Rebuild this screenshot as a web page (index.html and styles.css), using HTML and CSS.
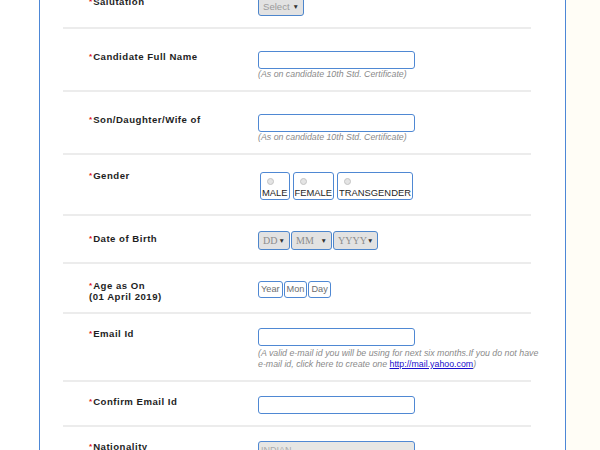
FILE: index.html
```html
<!DOCTYPE html>
<html lang="en">

<head>
    <meta charset="UTF-8">
    <meta name="viewport" content="width=device-width, initial-scale=1.0">
    <title>Application Form</title>
    <link rel="stylesheet" href="styles.css">
</head>

<body>
    <div class="page">
        <div class="form-box">
            <div class="row">
                <div class="label"><span class="req">*</span>Salutation</div>
                <div class="field">
                    <span class="select sel-sal">Select<i>&#9660;</i></span>
                </div>
            </div>

            <div class="row row-name">
                <div class="label"><span class="req">*</span>Candidate Full Name</div>
                <div class="field">
                    <span class="input"></span>
                    <p class="hint">(As on candidate 10th Std. Certificate)</p>
                </div>
            </div>

            <div class="row row-name">
                <div class="label"><span class="req">*</span>Son/Daughter/Wife of</div>
                <div class="field">
                    <span class="input"></span>
                    <p class="hint">(As on candidate 10th Std. Certificate)</p>
                </div>
            </div>

            <div class="row row-gender">
                <div class="label"><span class="req">*</span>Gender</div>
                <div class="field radios">
                    <label class="radio"><span class="dot"></span>MALE</label>
                    <label class="radio"><span class="dot"></span>FEMALE</label>
                    <label class="radio"><span class="dot"></span>TRANSGENDER</label>
                </div>
            </div>

            <div class="row row-dob">
                <div class="label"><span class="req">*</span>Date of Birth</div>
                <div class="field dates">
                    <span class="select serif sel-dd">DD<i>&#9660;</i></span>
                    <span class="select serif sel-mm">MM<i>&#9660;</i></span>
                    <span class="select serif sel-yy">YYYY<i>&#9660;</i></span>
                </div>
            </div>

            <div class="row row-age">
                <div class="label"><span class="req">*</span>Age as On<br>(01 April 2019)</div>
                <div class="field ages">
                    <span class="age">Year</span>
                    <span class="age">Mon</span>
                    <span class="age">Day</span>
                </div>
            </div>

            <div class="row row-email">
                <div class="label"><span class="req">*</span>Email Id</div>
                <div class="field">
                    <span class="input"></span>
                    <p class="hint hint-wide">(A valid e-mail id you will be using for next six months.If you do not have e-mail id, click here to create one <a href="#">http://mail.yahoo.com</a>)</p>
                </div>
            </div>

            <div class="row">
                <div class="label"><span class="req">*</span>Confirm Email Id</div>
                <div class="field">
                    <span class="input"></span>
                </div>
            </div>

            <div class="row">
                <div class="label"><span class="req">*</span>Nationality</div>
                <div class="field">
                    <span class="input input-off">INDIAN</span>
                </div>
            </div>
        </div>
        <div class="side"></div>
    </div>
</body>

</html>
```

FILE: styles.css
```css
* {
    margin: 0;
    padding: 0;
    box-sizing: border-box;
}

body {
    background: #fff;
    font-family: "Liberation Sans", Arial, sans-serif;
    color: #222;
}

.page {
    display: flex;
    height: 450px;
    overflow: hidden;
}

.form-box {
    width: 527px;
    margin-left: 39px;
    margin-top: -18px;
    border-left: 1px solid #4d87d6;
    border-right: 1px solid #4d87d6;
    background: #fff;
    flex-shrink: 0;
}

.side {
    flex: 1;
    background: #fffdf6;
}

.row {
    display: flex;
    align-items: flex-start;
    margin: 0 34px 0 23px;
    padding: 14px 0 11px 26px;
    border-bottom: 2px solid #ececec;
}

.row-name {
    padding-top: 22px;
    padding-bottom: 10px;
}

.row-gender {
    padding-top: 17px;
    padding-bottom: 14px;
}

.row-dob {
    padding-top: 15px;
    padding-bottom: 12px;
}

.row-age {
    padding-top: 17px;
    padding-bottom: 10px;
}

.row-email {
    padding-bottom: 10px;
}

.label {
    width: 169px;
    flex-shrink: 0;
    font-size: 9.6px;
    line-height: 11px;
    font-weight: bold;
    letter-spacing: 0.5px;
    color: #1e1e1e;
}

.row-gender .label {
    margin-top: -2px;
}

.row-dob .label {
    margin-top: 2px;
}

.row-age .label {
    margin-top: -1px;
}

.req {
    color: #e0141e;
    font-size: 8px;
    letter-spacing: 0;
    margin-right: 1px;
    vertical-align: top;
}

.field {
    flex: 1;
}

.input {
    display: block;
    width: 157px;
    height: 18px;
    border: 1px solid #4f88d3;
    border-radius: 3px;
    background: #fff;
}

.input-off {
    background: #e6e6e4;
    color: #aaa;
    font-size: 9px;
    line-height: 16px;
    padding-left: 2px;
}

.hint {
    font-size: 8.8px;
    line-height: 11px;
    font-style: italic;
    color: #8a8a8a;
}

.hint-wide {
    width: 284px;
    margin-top: 2px;
}

.hint a {
    color: #1a0dcc;
    font-style: normal;
    text-decoration: underline;
}

.select {
    display: inline-flex;
    align-items: center;
    justify-content: space-between;
    height: 19px;
    padding: 0 4px 0 4px;
    background: #e2e2e2;
    border: 1px solid #4d86cc;
    border-radius: 3px;
    font-size: 9.6px;
    color: #9a9a9a;
}

.select i {
    font-style: normal;
    font-size: 6.5px;
    color: #333;
}

.serif {
    font-family: "Liberation Serif", "Times New Roman", serif;
    font-size: 10px;
    color: #8c8c8c;
}

.sel-sal {
    width: 46px;
}

.dates {
    display: flex;
    gap: 1px;
}

.sel-dd {
    width: 32px;
}

.sel-mm {
    width: 41px;
}

.sel-yy {
    width: 45px;
}

.radios {
    display: flex;
    gap: 3px;
    padding-left: 2px;
}

.radio {
    display: flex;
    flex-direction: column;
    align-items: flex-start;
    height: 28px;
    padding: 5px 1px 0 1px;
    border: 1px solid #4f88d3;
    border-radius: 3px;
    font-size: 9.4px;
    line-height: 11px;
    color: #1e1e1e;
}

.dot {
    width: 7px;
    height: 7px;
    margin: 0 0 2px 5px;
    border: 1px solid #c4c4c4;
    border-radius: 50%;
    background: #e4e4e4;
}

.ages {
    display: flex;
    gap: 1px;
}

.age {
    height: 17px;
    padding: 0 2px;
    border: 1px solid #4f88d3;
    border-radius: 3px;
    font-size: 9.2px;
    line-height: 15px;
    color: #6e6e6e;
}
```
